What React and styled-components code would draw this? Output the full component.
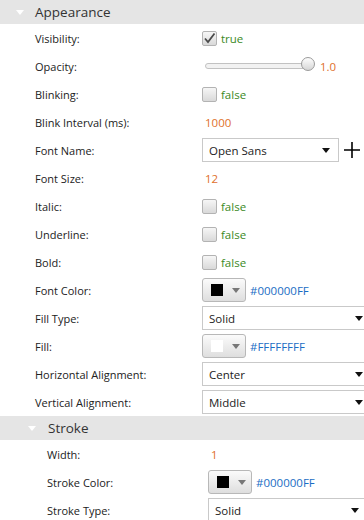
import React from "react";
import styled, { createGlobalStyle } from "styled-components";

const GlobalStyle = createGlobalStyle`
  body {
    margin: 0;
    background: #ffffff;
    font-family: "Open Sans", "Noto Sans", sans-serif;
  }
`;

const Panel = styled.div`
  width: 364px;
  height: 520px;
  overflow: hidden;
  background: #ffffff;
`;

const SectionHeader = styled.div`
  display: flex;
  align-items: center;
  height: 24px;
  padding-left: ${(p) => p.indent}px;
  background: #e5e5e5;
  color: #333;
  font-size: 13.5px;
`;

const Triangle = styled.span`
  width: 0;
  height: 0;
  border-left: 4px solid transparent;
  border-right: 4px solid transparent;
  border-top: 5px solid #ffffff;
  margin-right: ${(p) => p.gap}px;
`;

const Row = styled.div`
  display: flex;
  align-items: center;
  height: 28px;
  padding-left: ${(p) => p.indent}px;
`;

const Label = styled.div`
  width: ${(p) => p.width}px;
  flex-shrink: 0;
  font-size: 11px;
  color: #222;
  white-space: nowrap;
`;

const Value = styled.div`
  display: flex;
  align-items: center;
  flex: 1;
  min-width: 0;
  gap: ${(p) => p.gap || 0}px;
`;

const ValueText = styled.span`
  font-size: 11.5px;
  color: ${(p) =>
    p.kind === "bool" ? "#3b8a1e" : p.kind === "num" ? "#e0702c" : "#1a6dc4"};
  padding-left: ${(p) => p.pad || 0}px;
`;

const Checkbox = styled.span`
  position: relative;
  width: 15px;
  height: 15px;
  box-sizing: border-box;
  border: 1px solid #b3b3b3;
  border-radius: 2px;
  background: linear-gradient(#f6f6f6, #d9d9d9);
  margin-right: 4px;
  display: flex;
  align-items: center;
  justify-content: center;
`;

const SliderTrack = styled.div`
  position: relative;
  width: 100px;
  height: 4px;
  margin-left: 3px;
  border: 1px solid #c2c2c2;
  border-radius: 3px;
  background: #f2f2f2;
`;

const SliderThumb = styled.span`
  position: absolute;
  right: -9px;
  top: -7px;
  width: 14px;
  height: 14px;
  box-sizing: border-box;
  border: 1px solid #9a9a9a;
  border-radius: 50%;
  background: linear-gradient(#fdfdfd, #d6d6d6);
`;

const Select = styled.div`
  display: flex;
  align-items: center;
  justify-content: space-between;
  box-sizing: border-box;
  width: ${(p) => p.width}px;
  flex-shrink: 0;
  height: 24px;
  padding: 0 8px 0 6px;
  border: 1px solid #c9c9c9;
  background: #fff;
  font-size: 11.5px;
  color: #222;
`;

const Caret = styled.span`
  width: 0;
  height: 0;
  border-left: 4px solid transparent;
  border-right: 4px solid transparent;
  border-top: 5px solid ${(p) => p.color || "#111"};
`;

const ColorButton = styled.div`
  display: flex;
  align-items: center;
  box-sizing: border-box;
  width: 44px;
  height: 24px;
  padding-left: 8px;
  gap: 9px;
  border: 1px solid #b8b8b8;
  border-radius: 3px;
  background: linear-gradient(#fbfbfb, #dedede);
`;

const Swatch = styled.span`
  width: 12px;
  height: 12px;
  background: ${(p) => p.color};
`;

const Check = () => (
  <svg width="13" height="13" viewBox="0 0 13 13">
    <path d="M2 6.5 L5 10 L11.5 1.5" fill="none" stroke="#4a4a4a" strokeWidth="1.8" />
  </svg>
);

const Plus = () => (
  <svg width="16" height="16" viewBox="0 0 16 16">
    <path d="M8 0 V16 M0 8 H16" stroke="#000" strokeWidth="1.6" />
  </svg>
);

const Bool = ({ on }) => (
  <Value>
    <Checkbox>{on && <Check />}</Checkbox>
    <ValueText kind="bool">{on ? "true" : "false"}</ValueText>
  </Value>
);

const ColorValue = ({ color, text }) => (
  <Value gap={4}>
    <ColorButton>
      <Swatch color={color} />
      <Caret color="#777" />
    </ColorButton>
    <ValueText kind="color">{text}</ValueText>
  </Value>
);

const Dropdown = ({ text, width = 170 }) => (
  <Select width={width}>
    <span>{text}</span>
    <Caret />
  </Select>
);

const appearance = [
  ["Visibility:", <Bool on />],
  [
    "Opacity:",
    <Value gap={13}>
      <SliderTrack>
        <SliderThumb />
      </SliderTrack>
      <ValueText kind="num">1.0</ValueText>
    </Value>,
  ],
  ["Blinking:", <Bool />],
  ["Blink Interval (ms):", <ValueText kind="num" pad={3}>1000</ValueText>],
  [
    "Font Name:",
    <Value gap={5}>
      <Dropdown text="Open Sans" width={137} />
      <Plus />
    </Value>,
  ],
  ["Font Size:", <ValueText kind="num" pad={3}>12</ValueText>],
  ["Italic:", <Bool />],
  ["Underline:", <Bool />],
  ["Bold:", <Bool />],
  ["Font Color:", <ColorValue color="#000" text="#000000FF" />],
  ["Fill Type:", <Dropdown text="Solid" />],
  ["Fill:", <ColorValue color="#fff" text="#FFFFFFFF" />],
  ["Horizontal Alignment:", <Dropdown text="Center" />],
  ["Vertical Alignment:", <Dropdown text="Middle" />],
];

const stroke = [
  ["Width:", <ValueText kind="num" pad={3}>1</ValueText>],
  ["Stroke Color:", <ColorValue color="#000" text="#000000FF" />],
  ["Stroke Type:", <Dropdown text="Solid" width={160} />],
];

export default function App() {
  return (
    <Panel>
      <GlobalStyle />
      <SectionHeader indent={16}>
        <Triangle gap={11} />
        Appearance
      </SectionHeader>
      {appearance.map(([label, value]) => (
        <Row key={label} indent={35}>
          <Label width={167}>{label}</Label>
          {value}
        </Row>
      ))}
      <SectionHeader indent={28}>
        <Triangle gap={12} />
        Stroke
      </SectionHeader>
      {stroke.map(([label, value]) => (
        <Row key={label} indent={47}>
          <Label width={161}>{label}</Label>
          {value}
        </Row>
      ))}
    </Panel>
  );
}
